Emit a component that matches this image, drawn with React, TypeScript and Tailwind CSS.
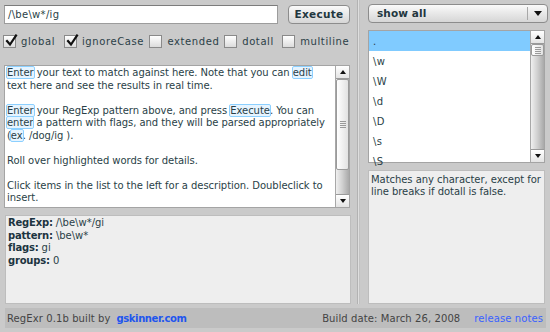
import React from "react";

const font = { fontFamily: '"DejaVu Sans", Verdana, sans-serif' };

function Check({ checked }: { checked: boolean }) {
  return (
    <div className="w-[13px] h-[13px] border border-[#8a8a8a] bg-gradient-to-b from-[#ffffff] to-[#dcdcdc] relative shrink-0">
      {checked && (
        <svg viewBox="0 0 13 13" className="absolute left-[1px] top-[-2px] w-[13px] h-[13px]">
          <path d="M2 7 L5 10.5 L11 1.5" fill="none" stroke="#111" strokeWidth="2.2" strokeLinecap="square" />
        </svg>
      )}
    </div>
  );
}

function Hl({ children }: { children: React.ReactNode }) {
  return (
    <span className="bg-[#e6f4ff] outline outline-1 outline-[#8cd0ff] rounded-[1px]">{children}</span>
  );
}

function VScroll({ thumbTop, thumbHeight }: { thumbTop: number; thumbHeight: number }) {
  return (
    <div className="w-[14px] h-full flex flex-col border-l border-[#a8a8a8] bg-gradient-to-r from-[#f0f0f0] via-[#cfcfcf] to-[#a9a9a9]">
      <div className="h-[13px] shrink-0 bg-gradient-to-b from-[#ffffff] to-[#e4e4e4] border-b border-[#9a9a9a] flex items-center justify-center">
        <div className="w-0 h-0 border-l-[3px] border-r-[3px] border-b-[4px] border-l-transparent border-r-transparent border-b-[#111]" />
      </div>
      <div className="flex-1 relative">
        <div
          className="absolute left-0 right-0 bg-gradient-to-r from-[#ffffff] to-[#e2e2e2] border border-[#9a9a9a] rounded-[2px] flex flex-col items-center justify-center gap-[1px]"
          style={{ top: thumbTop, height: thumbHeight }}
        >
          <div className="w-[6px] h-px bg-[#9a9a9a]" />
          <div className="w-[6px] h-px bg-[#9a9a9a]" />
          <div className="w-[6px] h-px bg-[#9a9a9a]" />
          <div className="w-[6px] h-px bg-[#9a9a9a]" />
        </div>
      </div>
      <div className="h-[13px] shrink-0 bg-gradient-to-b from-[#ffffff] to-[#e4e4e4] border-t border-[#9a9a9a] flex items-center justify-center">
        <div className="w-0 h-0 border-l-[3px] border-r-[3px] border-t-[4px] border-l-transparent border-r-transparent border-t-[#111]" />
      </div>
    </div>
  );
}

const flags = [
  { label: "global", checked: true, w: "w-[62px]" },
  { label: "ignoreCase", checked: true, w: "w-[87px]" },
  { label: "extended", checked: false, w: "w-[76px]" },
  { label: "dotall", checked: false, w: "w-[59px]" },
  { label: "multiline", checked: false, w: "w-[70px]" },
];

const tokens = [".", "\\w", "\\W", "\\d", "\\D", "\\s", "\\S"];

export default function App() {
  return (
    <div className="w-[550px] h-[332px] bg-[#cacaca] flex flex-col text-[#2a3f47] overflow-hidden" style={font}>
      <div className="flex h-[304px]">
        {/* left column */}
        <div className="ml-[4px] w-[347px] flex flex-col">
          <div className="flex items-center mt-[5px] gap-[10px]">
            <div className="w-[274px] h-[19px] bg-white border border-[#9c9c9c] border-t-[#7c7c7c] text-[10px] leading-[17px] px-[3px] tracking-[0.3px]">
              /\be\w*/ig
            </div>
            <div className="w-[62px] h-[19px] rounded-[4px] border border-[#8c8c8c] bg-gradient-to-b from-[#fafafa] to-[#d6d6d6] text-[10.5px] font-bold text-[#23373f] flex items-center justify-center tracking-[0.3px]">
              Execute
            </div>
          </div>
          <div className="flex items-center mt-[11px] ml-[-1px] h-[13px]">
            {flags.map((f) => (
              <div key={f.label} className={`flex items-center gap-[5px] ${f.w}`}>
                <Check checked={f.checked} />
                <span className="text-[10px] tracking-[0.6px]">{f.label}</span>
              </div>
            ))}
          </div>
          <div className="mt-[17px] h-[143px] w-[346px] bg-white border border-[#a4a4a4] flex">
            <div className="flex-1 pl-[2px] pt-[1px] text-[10px] leading-[12.5px] tracking-[-0.05px] whitespace-nowrap overflow-hidden">
              <Hl>Enter</Hl> your text to match against here. Note that you can <Hl>edit</Hl>
              <br />
              text here and see the results in real time.
              <br />
              <br />
              <Hl>Enter</Hl> your RegExp pattern above, and press <Hl>Execute</Hl>. You can
              <br />
              <Hl>enter</Hl> a pattern with flags, and they will be parsed appropriately
              <br />
              (<Hl>ex</Hl>. /dog/ig ).
              <br />
              <br />
              Roll over highlighted words for details.
              <br />
              <br />
              Click items in the list to the left for a description. Doubleclick to
              <br />
              insert.
            </div>
            <VScroll thumbTop={0} thumbHeight={91} />
          </div>
          <div className="mt-[7px] ml-[1px] flex-1 bg-[#eeeeee] border border-[#bdbdbd] pl-[2px] pt-[1px] text-[10px] leading-[12.7px] tracking-[0px] whitespace-nowrap">
            <div><span className="font-bold text-[#1c3440] tracking-[-0.2px]">RegExp:</span> /\be\w*/gi</div>
            <div><span className="font-bold text-[#1c3440] tracking-[-0.2px]">pattern:</span> \be\w*</div>
            <div><span className="font-bold text-[#1c3440] tracking-[-0.2px]">flags:</span> gi</div>
            <div><span className="font-bold text-[#1c3440] tracking-[-0.2px]">groups:</span> 0</div>
          </div>
        </div>

        {/* divider */}
        <div className="ml-[6px] mr-[8px] w-[3px] flex">
          <div className="w-px bg-[#b2b2b2]" />
          <div className="w-px bg-[#dedede]" />
          <div className="w-px bg-[#c2c2c2]" />
        </div>

        {/* right column */}
        <div className="w-[180px] flex flex-col">
          <div className="mt-[4px] h-[19px] rounded-[4px] border border-[#8c8c8c] bg-gradient-to-b from-[#fafafa] to-[#d6d6d6] flex items-center">
            <span className="flex-1 pl-[8px] text-[10.5px] font-bold text-[#23373f] tracking-[0.1px]">show all</span>
            <div className="w-px h-[13px] bg-[#a8a8a8]" />
            <div className="w-[19px] flex items-center justify-center">
              <div className="w-0 h-0 border-l-[4px] border-r-[4px] border-t-[5px] border-l-transparent border-r-transparent border-t-[#111]" />
            </div>
          </div>
          <div className="mt-[7px] h-[133px] w-[177px] bg-white border border-[#a4a4a4] flex">
            <div className="flex-1 flex flex-col">
              {tokens.map((t, i) => (
                <div
                  key={t}
                  className={`h-[20px] shrink-0 flex items-center pl-[4px] text-[10px] tracking-[0.3px] ${i === 0 ? "bg-[#80cbff]" : ""}`}
                >
                  {t}
                </div>
              ))}
            </div>
            <VScroll thumbTop={0} thumbHeight={12} />
          </div>
          <div className="mt-[7px] flex-1 w-[177px] bg-[#eeeeee] border border-[#bdbdbd] pl-[2px] pt-[3px] text-[10px] leading-[12px] tracking-[-0.05px] whitespace-nowrap">
            Matches any character, except for
            <br />
            line breaks if dotall is false.
          </div>
        </div>
      </div>

      {/* footer */}
      <div className="mt-[4px] mx-[5px] w-[541px] h-[20px] bg-[#bdbdbd] flex items-center text-[10px] tracking-[0.1px] text-[#444] whitespace-nowrap">
        <span className="pl-[2px]">RegExr 0.1b built by</span>
        <span className="ml-[6px] font-bold text-[#1f56ee] tracking-[-0.4px]">gskinner.com</span>
        <span className="ml-auto">Build date: March 26, 2008</span>
        <span className="ml-[14px] mr-[3px] text-[#3a62ff]">release notes</span>
      </div>
    </div>
  );
}
